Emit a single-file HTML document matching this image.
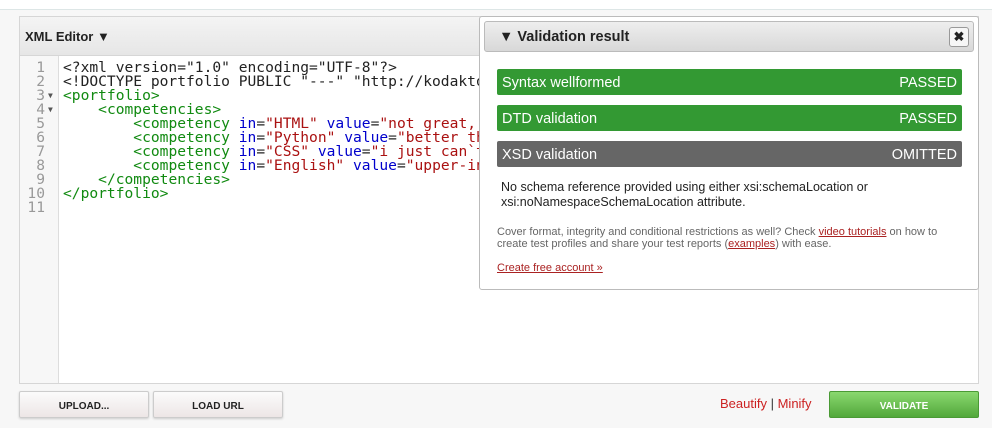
<!DOCTYPE html>
<html><head><style>
*{margin:0;padding:0;box-sizing:border-box}
body{width:992px;height:428px;background:#f7f7f7;font-family:"Liberation Sans",sans-serif;position:relative;overflow:hidden}
.top{position:absolute;left:0;top:0;width:992px;height:10px;background:#fff;border-bottom:1px solid #dde6e6}
.ed{position:absolute;left:19px;top:16px;width:960px;height:368px;border:1px solid #d6d6d6;background:#fff}
.hd{height:39px;background:linear-gradient(#f4f4f4,#e6e6e6);border-bottom:1px solid #d6d6d6;font-weight:bold;font-size:13px;color:#222;padding:12px 0 0 5px}
.gut{position:absolute;left:0;top:39px;width:39px;bottom:0;background:#f7f7f7;border-right:1px solid #ddd}
.code{position:absolute;left:0;top:44px;font-family:"DejaVu Sans Mono","Liberation Mono",monospace;font-size:14.6px;line-height:14px;white-space:pre}
.ln{position:absolute;left:0;width:25px;text-align:right;color:#999}
.ar{position:absolute;left:28px;font-size:8px;color:#555;line-height:14px}
.tx{position:absolute;left:43px;color:#222}
.g{color:#118a11}.b{color:#00c}.r{color:#a11}
.pop{position:absolute;left:479px;top:16px;width:500px;height:274px;background:#fff;border:1px solid #bbb;border-radius:3px}
.ph{position:absolute;left:4px;top:4px;width:490px;height:31px;background:linear-gradient(#eee,#d8d8d8);border:1px solid #bbb;border-radius:3px;font-weight:bold;font-size:14.5px;color:#222;padding:7px 0 0 14px}
.x{position:absolute;right:4px;top:5px;width:20px;height:20px;border:1px solid #999;border-radius:3px;background:#f6f6f6;font-size:13px;text-align:center;line-height:18px;padding:0}
.bar{position:absolute;left:17px;width:465px;height:26px;border-radius:2px;color:#fff;font-size:14.5px;line-height:28px;padding:0 5px}
.bar span{float:right}
.p1{position:absolute;left:21px;top:163px;font-size:12.5px;color:#222;line-height:14.5px}
.p2{position:absolute;left:17px;top:209px;font-size:11px;color:#666;line-height:12px}
a{color:#a22;text-decoration:underline}
.btn{position:absolute;top:391px;height:27px;width:130px;border:1px solid #ccc;border-radius:2px;background:linear-gradient(#fbfbfb,#ede6e6);font-size:10px;font-weight:bold;text-align:center;line-height:29px;color:#222;box-shadow:0 1px 2px #ccc}
</style></head><body>
<div class="top"></div>
<div class="ed"><div class="hd">XML Editor ▼</div>
<div class="gut"></div>
<div class="code">
<div class="ln" style="top:0">1</div><div class="ln" style="top:14px">2</div><div class="ln" style="top:28px">3</div><div class="ln" style="top:42px">4</div><div class="ln" style="top:56px">5</div><div class="ln" style="top:70px">6</div><div class="ln" style="top:84px">7</div><div class="ln" style="top:98px">8</div><div class="ln" style="top:112px">9</div><div class="ln" style="top:126px">10</div><div class="ln" style="top:140px">11</div>
<div class="ar" style="top:28px">▼</div><div class="ar" style="top:42px">▼</div>
<div class="tx" style="top:0">&lt;?xml version="1.0" encoding="UTF-8"?&gt;
&lt;!DOCTYPE portfolio PUBLIC "---" "http://kodaktor.ru/portfolio.dtd"&gt;
<span class="g">&lt;portfolio&gt;</span>
    <span class="g">&lt;competencies&gt;</span>
        <span class="g">&lt;competency</span> <span class="b">in</span>=<span class="r">"HTML"</span> <span class="b">value</span>=<span class="r">"not great, not terrible"</span>
        <span class="g">&lt;competency</span> <span class="b">in</span>=<span class="r">"Python"</span> <span class="b">value</span>=<span class="r">"better than HTML"</span>
        <span class="g">&lt;competency</span> <span class="b">in</span>=<span class="r">"CSS"</span> <span class="b">value</span>=<span class="r">"i just can`t"</span>
        <span class="g">&lt;competency</span> <span class="b">in</span>=<span class="r">"English"</span> <span class="b">value</span>=<span class="r">"upper-intermediate"</span>
    <span class="g">&lt;/competencies&gt;</span>
<span class="g">&lt;/portfolio&gt;</span></div>
</div></div>
<div class="pop">
<div class="ph">▼ Validation result<div class="x">✖</div></div>
<div class="bar" style="top:52px;background:#339933">Syntax wellformed<span>PASSED</span></div>
<div class="bar" style="top:88px;background:#339933">DTD validation<span>PASSED</span></div>
<div class="bar" style="top:124px;background:#666">XSD validation<span>OMITTED</span></div>
<div class="p1">No schema reference provided using either xsi:schemaLocation or<br>xsi:noNamespaceSchemaLocation attribute.</div>
<div class="p2">Cover format, integrity and conditional restrictions as well? Check <a>video tutorials</a> on how to<br>create test profiles and share your test reports (<a>examples</a>) with ease.<br><br><a>Create free account »</a></div>
</div>
<div class="btn" style="left:19px">UPLOAD...</div>
<div class="btn" style="left:153px">LOAD URL</div>
<div style="position:absolute;left:720px;top:396px;font-size:13px;color:#c22">Beautify <span style="color:#333">|</span> Minify</div>
<div style="position:absolute;left:829px;top:391px;width:150px;height:27px;border-radius:2px;background:linear-gradient(#8ad86f,#52a83b);border:1px solid #4a9a35;color:#fff;font-size:10px;font-weight:bold;text-align:center;line-height:29px">VALIDATE</div>
</body></html>
